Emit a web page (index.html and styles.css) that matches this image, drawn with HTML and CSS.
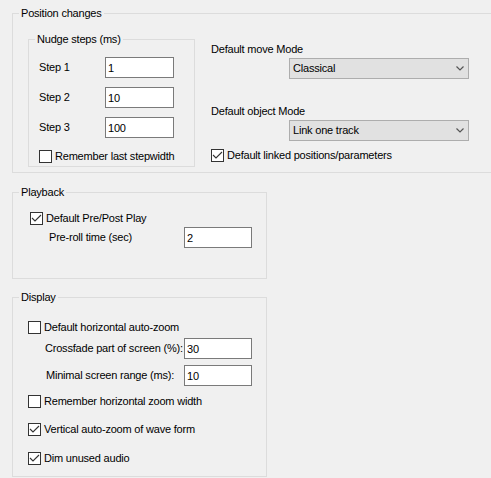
FILE: index.html
```html
<!DOCTYPE html>
<html lang="en">
  <head>
    <meta charset="UTF-8" />
    <meta name="viewport" content="width=device-width, initial-scale=1.0" />
    <title>Options</title>
    <link rel="stylesheet" href="styles.css">
  </head>
  <body>
    <div class="options">
      <fieldset class="group position-group">
        <legend>Position changes</legend>
        <div class="position-body">
          <fieldset class="group nudge">
            <legend>Nudge steps (ms)</legend>
            <div class="nudge-body">
              <div class="step-row">
                <label>Step 1</label>
                <input class="text-field" type="text" value="1" />
              </div>
              <div class="step-row">
                <label>Step 2</label>
                <input class="text-field" type="text" value="10" />
              </div>
              <div class="step-row">
                <label>Step 3</label>
                <input class="text-field" type="text" value="100" />
              </div>
              <label class="check remember-step">
                <span class="box"></span>Remember last stepwidth
              </label>
            </div>
          </fieldset>

          <div class="modes">
            <div class="mode-label">Default move Mode</div>
            <div class="combo">
              <span>Classical</span>
              <svg width="8" height="5" viewBox="0 0 8 5"><polyline points="0.5,0.5 4,4 7.5,0.5" /></svg>
            </div>
            <div class="mode-label second">Default object Mode</div>
            <div class="combo">
              <span>Link one track</span>
              <svg width="8" height="5" viewBox="0 0 8 5"><polyline points="0.5,0.5 4,4 7.5,0.5" /></svg>
            </div>
            <label class="check linked">
              <span class="box"><svg width="11" height="11" viewBox="0 0 11 11"><polyline points="1,5 4,8 10,2" /></svg></span>Default linked positions/parameters
            </label>
          </div>
        </div>
      </fieldset>

      <fieldset class="group playback">
        <legend>Playback</legend>
        <div class="playback-body">
          <label class="check">
            <span class="box"><svg width="11" height="11" viewBox="0 0 11 11"><polyline points="1,5 4,8 10,2" /></svg></span>Default Pre/Post Play
          </label>
          <div class="field-row preroll">
            <label>Pre-roll time (sec)</label>
            <input class="text-field" type="text" value="2" />
          </div>
        </div>
      </fieldset>

      <fieldset class="group display">
        <legend>Display</legend>
        <div class="display-body">
          <label class="check">
            <span class="box"></span>Default horizontal auto-zoom
          </label>
          <div class="field-row crossfade">
            <label>Crossfade part of screen (%):</label>
            <input class="text-field" type="text" value="30" />
          </div>
          <div class="field-row minimal">
            <label>Minimal screen range (ms):</label>
            <input class="text-field" type="text" value="10" />
          </div>
          <label class="check zoom-width">
            <span class="box"></span>Remember horizontal zoom width
          </label>
          <label class="check vertical-zoom">
            <span class="box"><svg width="11" height="11" viewBox="0 0 11 11"><polyline points="1,5 4,8 10,2" /></svg></span>Vertical auto-zoom of wave form
          </label>
          <label class="check dim-audio">
            <span class="box"><svg width="11" height="11" viewBox="0 0 11 11"><polyline points="1,5 4,8 10,2" /></svg></span>Dim unused audio
          </label>
        </div>
      </fieldset>
    </div>
  </body>
</html>
```

FILE: styles.css
```css
/* Reset some default styles */
body,
fieldset,
legend,
label,
input {
  margin: 0;
  padding: 0;
  box-sizing: border-box;
}

body {
  font-family: "Liberation Sans", Arial, sans-serif;
  font-size: 11px;
  line-height: 13px;
  letter-spacing: -0.2px;
  color: #000;
  background-color: #f0f0f0;
  overflow: hidden;
}

.options {
  padding: 7px 0 0 12px;
}

/* group boxes */
.group {
  border: 1px solid #dcdcdc;
  min-width: 0;
}

.group legend {
  margin-left: 6px;
  padding: 0 2px;
  line-height: 13px;
}

/* right border sits just past the window edge */
.position-group {
  width: 480px;
}

.position-body {
  display: flex;
  align-items: flex-start;
  padding: 13px 0 5px 15px;
}

/* nudge steps */
.nudge {
  width: 167px;
  flex-shrink: 0;
}

.nudge-body {
  padding: 11px 0 3px 10px;
}

.step-row {
  display: flex;
  align-items: center;
  height: 21px;
  margin-bottom: 9px;
}

.step-row label {
  width: 66px;
}

.step-row .text-field {
  width: 69px;
}

.remember-step {
  margin-top: 12px;
}

/* text inputs */
.text-field {
  height: 21px;
  flex-shrink: 0;
  border: 1px solid #7a7a7a;
  background-color: #fff;
  padding: 0 2px;
  font-family: inherit;
  font-size: 11px;
  letter-spacing: inherit;
  color: #000;
  outline: none;
}

/* move / object mode */
.modes {
  margin: 10px 0 0 16px;
  width: 258px;
}

.mode-label.second {
  margin-top: 26px;
}

.combo {
  display: flex;
  align-items: center;
  justify-content: space-between;
  width: 180px;
  height: 21px;
  margin: 2px 0 0 78px;
  padding: 0 4px 0 3px;
  border: 1px solid #adadad;
  background-color: #e1e1e1;
  box-sizing: border-box;
}

.combo svg polyline {
  fill: none;
  stroke: #555;
  stroke-width: 1.2;
}

.linked {
  margin-top: 8px;
}

/* checkboxes */
.check {
  display: flex;
  align-items: center;
  height: 13px;
  white-space: nowrap;
}

.check .box {
  width: 13px;
  height: 13px;
  margin-right: 3px;
  border: 1px solid #333;
  background-color: #fff;
  box-sizing: border-box;
  flex-shrink: 0;
}

.check .box svg {
  display: block;
}

.check .box polyline {
  fill: none;
  stroke: #333;
  stroke-width: 1.1;
}

/* label + input rows */
.field-row {
  display: flex;
  align-items: center;
  height: 21px;
}

.field-row label {
  flex-shrink: 0;
  white-space: nowrap;
}

.field-row .text-field {
  width: 68px;
}

/* playback */
.playback {
  width: 255px;
  margin-top: 13px;
}

.playback-body {
  padding: 13px 0 30px 17px;
}

.preroll {
  margin-top: 2px;
}

.preroll label {
  width: 154px;
  padding-left: 19px;
}

/* display */
.display {
  width: 255px;
  margin-top: 12px;
}

.display-body {
  padding: 17px 0 11px 15px;
}

.crossfade {
  margin-top: 4px;
}

.crossfade label {
  width: 156px;
  padding-left: 17px;
}

.minimal {
  margin-top: 6px;
}

.minimal label {
  width: 156px;
  padding-left: 18px;
}

.zoom-width {
  margin-top: 9px;
}

.vertical-zoom {
  margin-top: 15px;
}

.dim-audio {
  margin-top: 16px;
}
```
